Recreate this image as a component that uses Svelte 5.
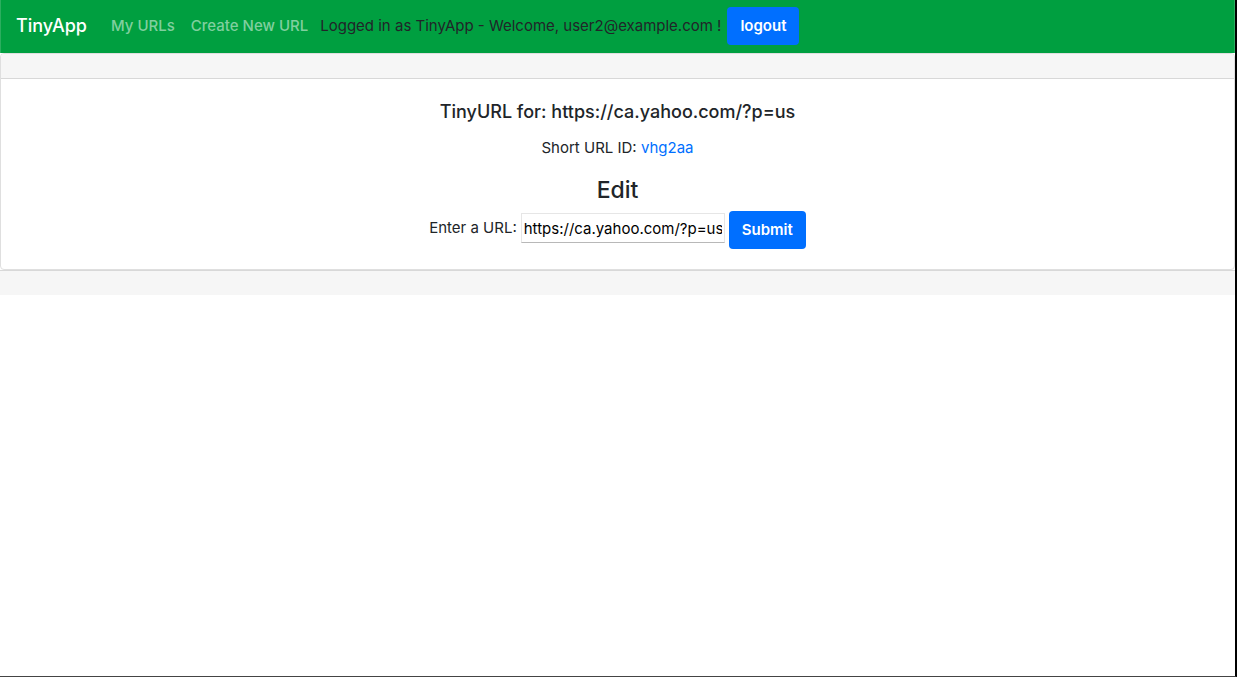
<script>
  let url = $state('https://ca.yahoo.com/?p=us');
  const user = 'user2@example.com';
  const shortId = 'vhg2aa';
</script>

<div class="page">
  <header>
    <nav class="navbar">
      <a class="brand" href="#home">TinyApp</a>
      <a class="nav-link" href="#urls">My URLs</a>
      <a class="nav-link" href="#new">Create New URL</a>
      <form class="session" onsubmit={(e) => e.preventDefault()}>
        <span>Logged in as TinyApp - Welcome, {user} !</span>
        <button class="btn" type="submit">logout</button>
      </form>
    </nav>
  </header>

  <main>
    <div class="card">
      <div class="card-header"></div>
      <div class="card-body">
        <h5>TinyURL for: {url}</h5>
        <p>Short URL ID: <a href="#short">{shortId}</a></p>
        <h4>Edit</h4>
        <form class="edit" onsubmit={(e) => e.preventDefault()}>
          <label for="long-url">Enter a URL:</label>
          <input id="long-url" type="text" value={url} />
          <button class="btn" type="submit">Submit</button>
        </form>
      </div>
    </div>
    <div class="card-footer"></div>
  </main>
</div>

<style>
  :global(body) {
    margin: 0;
    background: #fff;
  }
  .page {
    box-sizing: border-box;
    min-height: 100vh;
    border-right: 2px solid #000;
    border-bottom: 1px solid #444;
    color: #212529;
    font-family: Inter, "Liberation Sans", sans-serif;
    font-size: 15px;
    line-height: 24px;
  }
  a {
    color: #006fff;
    text-decoration: none;
  }
  .navbar {
    display: flex;
    align-items: center;
    box-sizing: border-box;
    height: 53px;
    padding: 0 15px 2px;
    background: #009f40;
    border-left: 1px solid #2bae5f;
    border-right: 1px solid #2bae5f;
    white-space: nowrap;
  }
  .brand {
    margin-right: 16px;
    color: #fff;
    font-size: 18px;
    font-weight: 500;
  }
  .nav-link {
    padding: 8px;
    color: #80cf9f;
    font-weight: 500;
  }
  .session {
    display: flex;
    align-items: center;
    gap: 6px;
    margin-left: 4px;
  }
  .btn {
    box-sizing: border-box;
    height: 38px;
    padding: 0 13px;
    border: 0;
    border-radius: 4px;
    background: #006fff;
    color: #fff;
    font: inherit;
    font-weight: 600;
    cursor: pointer;
  }
  .card {
    border: 1px solid #dfdfdf;
    border-radius: 4px;
    background: #fff;
  }
  .card-header {
    height: 24px;
    background: #f6f6f6;
    border-bottom: 1px solid #d8d8d8;
    border-radius: 3px 3px 0 0;
  }
  .card-body {
    padding: 20px;
    text-align: center;
  }
  h5,
  h4,
  p {
    margin: 0;
  }
  h5 {
    margin-bottom: 12px;
    font-size: 18px;
    font-weight: 500;
    line-height: 25px;
  }
  p {
    margin-bottom: 16px;
  }
  h4 {
    margin-bottom: 7px;
    font-size: 23px;
    font-weight: 500;
    line-height: 28px;
  }
  .edit {
    display: flex;
    justify-content: center;
    align-items: center;
    gap: 4px;
  }
  .edit label,
  .edit input {
    margin-bottom: 4px;
  }
  .edit input {
    box-sizing: border-box;
    width: 204px;
    height: 30px;
    padding: 0 2px;
    border: 1px solid #e6e6e6;
    border-bottom-color: #b8b8b8;
    background: #fff;
    color: #000;
    font: inherit;
  }
  .card-footer {
    height: 24px;
    background: #f6f6f6;
    border-top: 1px solid #d8d8d8;
  }
</style>
